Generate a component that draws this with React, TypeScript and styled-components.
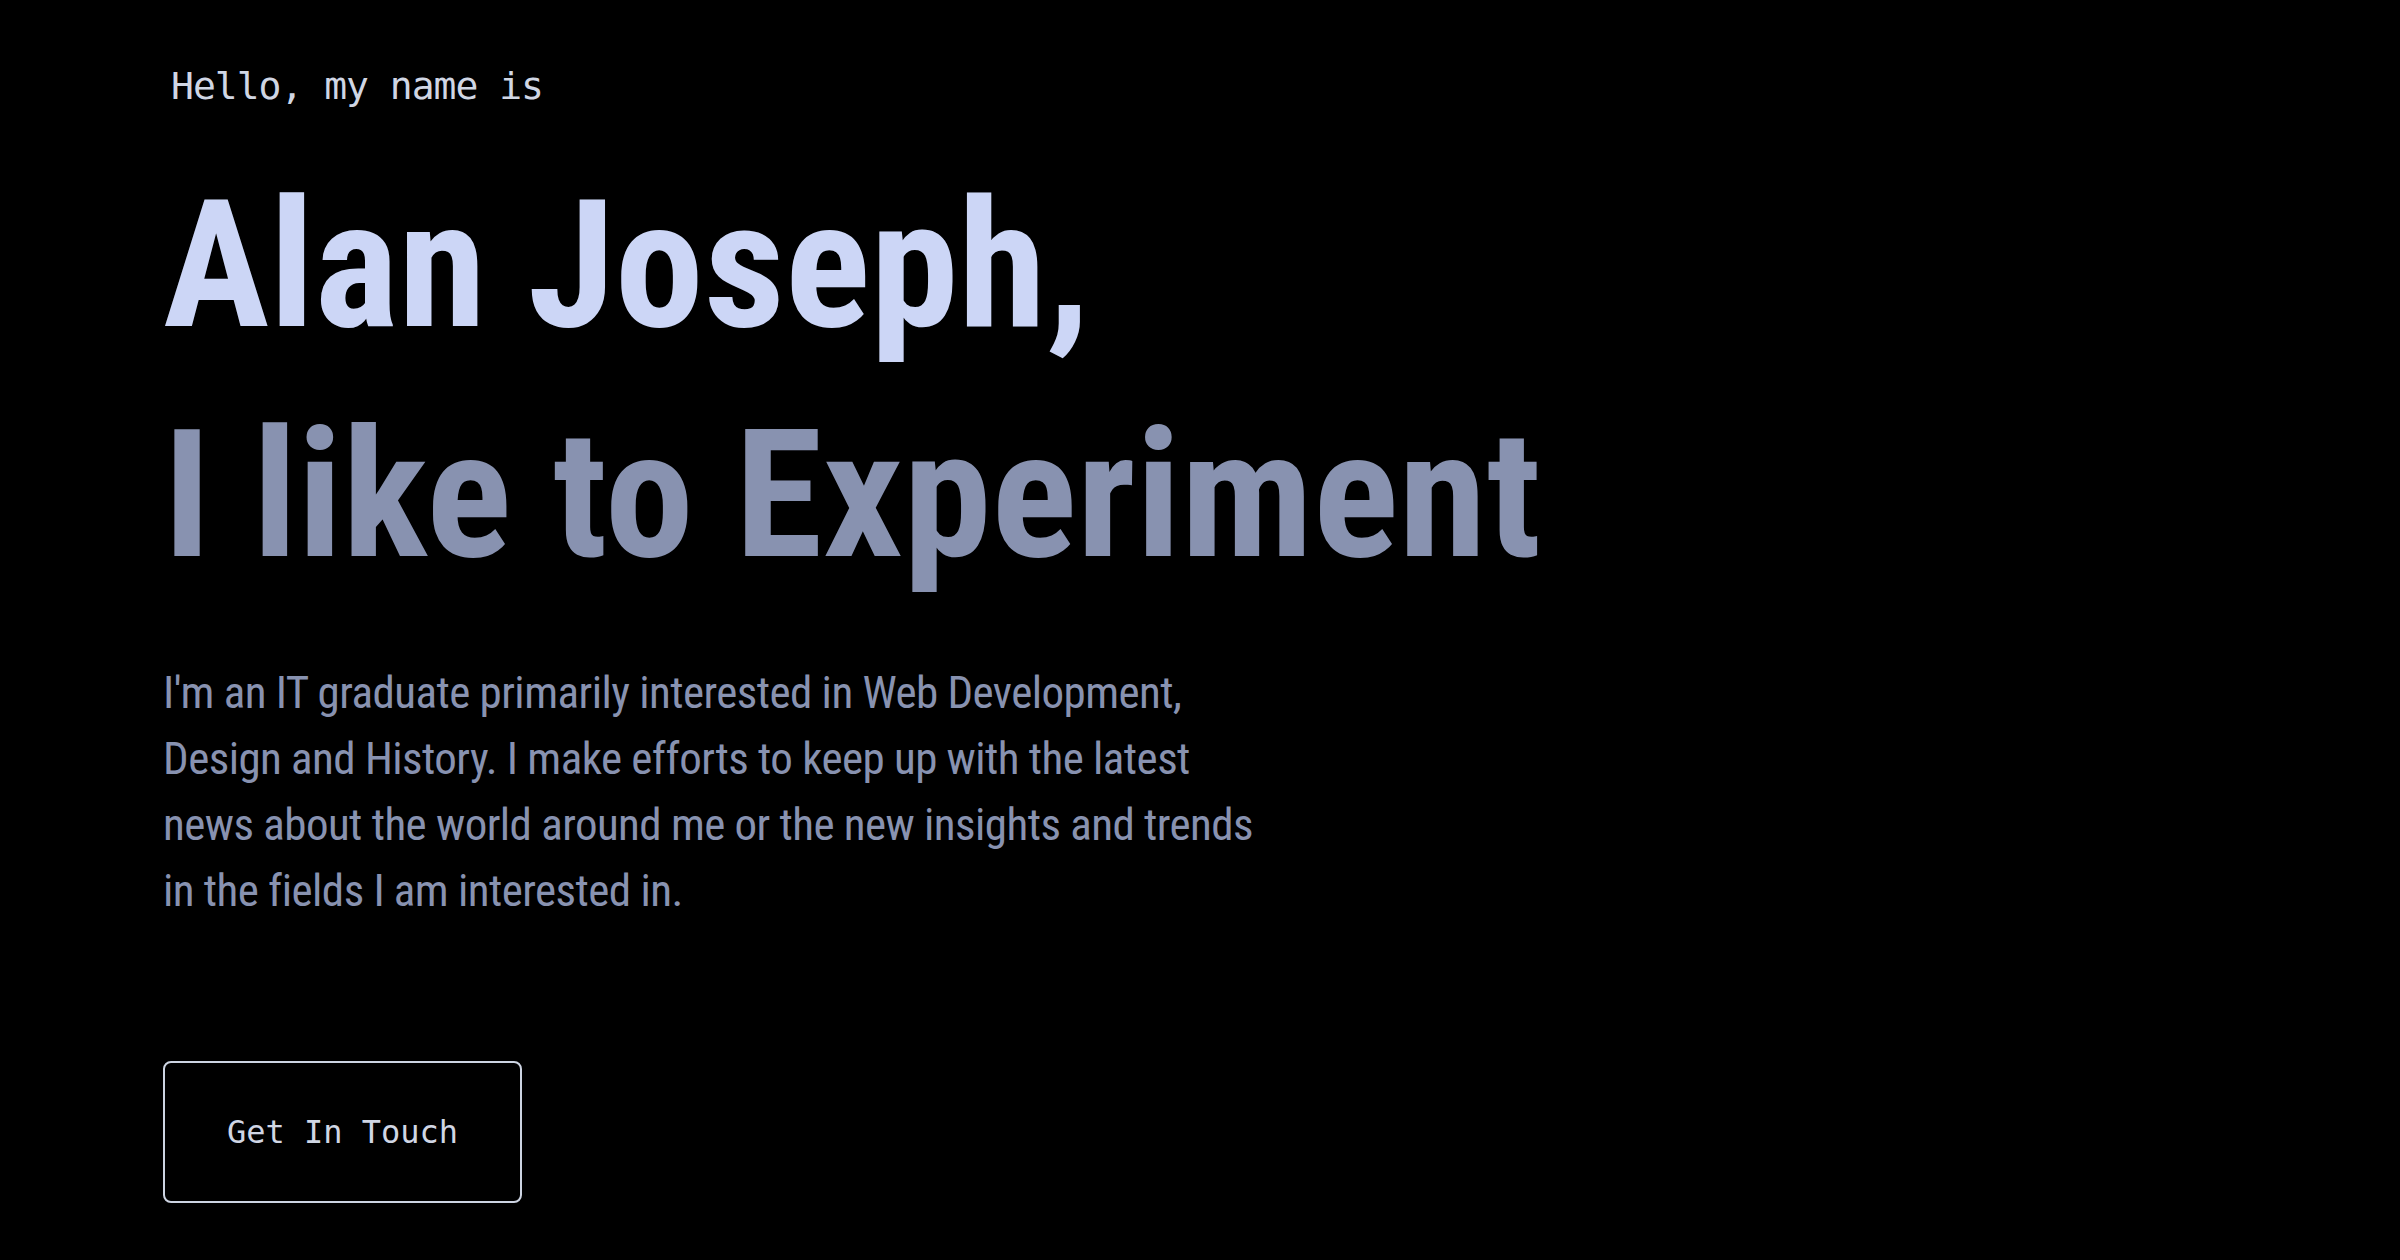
import React from "react";
import styled, { createGlobalStyle } from "styled-components";

const GlobalStyle = createGlobalStyle`
  html, body {
    margin: 0;
    padding: 0;
    background: #000000;
  }
  body {
    min-height: 1260px;
    font-family: Roboto, "Liberation Sans", Arial, sans-serif;
  }
  * { box-sizing: border-box; }
`;

const Hero = styled.section`
  display: flex;
  flex-direction: column;
  align-items: flex-start;
  padding: 64px 0 0 163px;
  min-height: 1260px;
  background: #000000;
`;

const Greeting = styled.p`
  margin: 0 0 0 8px;
  font-family: "DejaVu Sans Mono", "Liberation Mono", monospace;
  font-size: 38px;
  line-height: 44px;
  letter-spacing: -1px;
  color: #d0d6e4;
`;

const Title = styled.h1`
  margin: 42px 0 0 0;
  font-family: Roboto, "Liberation Sans", Arial, sans-serif;
  font-stretch: 75%;
  font-weight: 700;
  font-size: 178px;
  line-height: 230px;
  letter-spacing: 0.2px;
`;

const TitleLine = styled.span<{ $tone: "light" | "muted" }>`
  display: block;
  white-space: nowrap;
  color: ${(p) => (p.$tone === "light" ? "#ccd6f6" : "#8892b0")};
`;

const Intro = styled.p`
  margin: 50px 0 0 0;
  font-family: Roboto, "Liberation Sans", Arial, sans-serif;
  font-stretch: 75%;
  font-weight: 400;
  font-size: 45px;
  line-height: 66px;
  letter-spacing: -0.55px;
  color: #8892b0;
  white-space: nowrap;
`;

const ContactButton = styled.a`
  margin-top: 137px;
  display: flex;
  align-items: center;
  justify-content: center;
  width: 359px;
  height: 142px;
  border: 2px solid #cdd4e2;
  border-radius: 8px;
  font-family: "DejaVu Sans Mono", "Liberation Mono", monospace;
  font-size: 32px;
  color: #d0d6e4;
  text-decoration: none;
  background: transparent;
`;

export default function App() {
  return (
    <>
      <GlobalStyle />
      <Hero>
        <Greeting>Hello, my name is</Greeting>
        <Title>
          <TitleLine $tone="light">Alan Joseph,</TitleLine>
          <TitleLine $tone="muted">I like to Experiment</TitleLine>
        </Title>
        <Intro>
          I'm an IT graduate primarily interested in Web Development,
          <br />
          Design and History. I make efforts to keep up with the latest
          <br />
          news about the world around me or the new insights and trends
          <br />
          in the fields I am interested in.
        </Intro>
        <ContactButton href="#contact">Get In Touch</ContactButton>
      </Hero>
    </>
  );
}
